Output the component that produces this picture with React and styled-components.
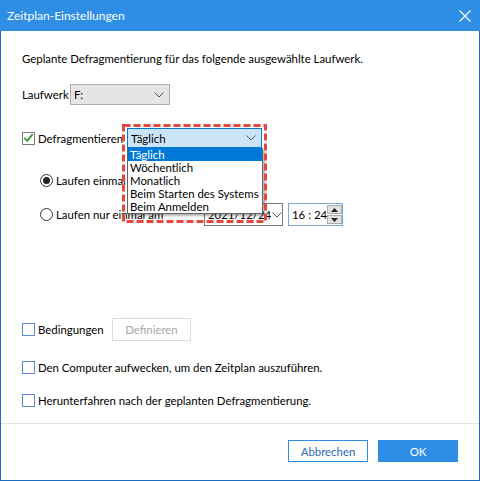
import React from "react";
import styled, { createGlobalStyle } from "styled-components";

const GlobalStyle = createGlobalStyle`
  html, body {
    margin: 0;
    padding: 0;
    background: #ffffff;
  }
  body {
    font-family: "Lato", "Noto Sans", "DejaVu Sans", sans-serif;
    font-size: 11.4px;
    color: #000;
  }
`;

const options = [
  "Täglich",
  "Wöchentlich",
  "Monatlich",
  "Beim Starten des Systems",
  "Beim Anmelden",
];

function App() {
  return (
    <>
      <GlobalStyle />
      <StWindow>
        <StTitleBar>
          <StTitle>Zeitplan-Einstellungen</StTitle>
          <StClose>
            <svg width="12" height="12" viewBox="0 0 12 12">
              <path d="M0.5 0.5 L11.5 11.5 M11.5 0.5 L0.5 11.5" stroke="#fff" strokeWidth="1.1" />
            </svg>
          </StClose>
        </StTitleBar>

        <StBody>
          <StRow $top={18} $h={18}>
            Geplante Defragmentierung für das folgende ausgewählte Laufwerk.
          </StRow>

          <StRow $top={17} $h={21}>
            <StLabel $w={48}>Laufwerk</StLabel>
            <StDriveSelect>
              <span>F:</span>
              <Chevron />
            </StDriveSelect>
          </StRow>

          <StRow $top={23} $h={20}>
            <StCheck $checked>
              <svg width="12" height="12" viewBox="0 0 12 12">
                <path d="M1.5 6 L4.6 9.2 L10.6 1.8" fill="none" stroke="#2ea02e" strokeWidth="2" />
              </svg>
            </StCheck>
            <StLabel $w={89}>Defragmentieren</StLabel>
            <StComboWrap>
              <StCombo>
                <span>Täglich</span>
                <Chevron />
              </StCombo>
              <StList>
                {options.map((o, i) => (
                  <StOption key={o} $selected={i === 0}>
                    {o}
                  </StOption>
                ))}
              </StList>
              <StFrame width="145" height="99" viewBox="0 0 145 99">
                <rect
                  x="1.5"
                  y="1.5"
                  width="142"
                  height="96"
                  fill="none"
                  stroke="#e8473f"
                  strokeWidth="3"
                  strokeDasharray="7 3"
                />
              </StFrame>
            </StComboWrap>
          </StRow>

          <StRow $top={24} $h={16} $indent={18}>
            <StRadio $checked />
            <StLabel>Laufen einmal täglich um</StLabel>
          </StRow>

          <StRow $top={15} $h={23} $indent={18}>
            <StRadio />
            <StLabel $w={148}>Laufen nur einmal am</StLabel>
            <StDate>
              <span>2021/12/24</span>
              <StDateArrow>
                <Chevron />
              </StDateArrow>
            </StDate>
            <StTime>
              <span>16 : 24</span>
              <StSpin>
                <StSpinBtn>
                  <svg width="7" height="4" viewBox="0 0 7 4">
                    <path d="M0 4 L3.5 0 L7 4 Z" fill="#222" />
                  </svg>
                </StSpinBtn>
                <StSpinBtn>
                  <svg width="7" height="4" viewBox="0 0 7 4">
                    <path d="M0 0 L3.5 4 L7 0 Z" fill="#222" />
                  </svg>
                </StSpinBtn>
              </StSpin>
            </StTime>
          </StRow>

          <StRow $top={92} $h={23}>
            <StCheck />
            <StLabel $w={74}>Bedingungen</StLabel>
            <StDisabledBtn>Definieren</StDisabledBtn>
          </StRow>

          <StRow $top={18} $h={16}>
            <StCheck />
            <StLabel>Den Computer aufwecken, um den Zeitplan auszuführen.</StLabel>
          </StRow>

          <StRow $top={17} $h={16}>
            <StCheck />
            <StLabel>Herunterfahren nach der geplanten Defragmentierung.</StLabel>
          </StRow>
        </StBody>

        <StFooter>
          <StCancelBtn>Abbrechen</StCancelBtn>
          <StOkBtn>OK</StOkBtn>
        </StFooter>
      </StWindow>
    </>
  );
}

function Chevron() {
  return (
    <svg width="10" height="6" viewBox="0 0 10 6">
      <path d="M0.5 0.5 L5 5 L9.5 0.5" fill="none" stroke="#555" strokeWidth="1" />
    </svg>
  );
}

export default App;

const StWindow = styled.div`
  width: 480px;
  height: 481px;
  box-sizing: border-box;
  border: 1px solid #1b6cc0;
  border-top: none;
  display: flex;
  flex-direction: column;
  background: #fff;
`;

const StTitleBar = styled.div`
  height: 31px;
  margin: 0 -1px;
  background-color: #2e8de4;
  display: flex;
  align-items: center;
  justify-content: space-between;
  padding: 0 8px 0 7px;
  flex-shrink: 0;
`;

const StTitle = styled.div`
  color: #fff;
  font-size: 12px;
`;

const StClose = styled.div`
  width: 14px;
  height: 14px;
  display: flex;
  align-items: center;
  justify-content: center;
`;

const StBody = styled.div`
  flex: 1;
  padding: 0 20px 0 21px;
`;

const StRow = styled.div`
  display: flex;
  align-items: center;
  height: ${(p) => p.$h}px;
  margin-top: ${(p) => p.$top}px;
  padding-left: ${(p) => p.$indent || 0}px;
  white-space: nowrap;
`;

const StLabel = styled.div`
  width: ${(p) => (p.$w ? `${p.$w}px` : "auto")};
  flex-shrink: 0;
`;

const StCheck = styled.div`
  width: 13px;
  height: 13px;
  box-sizing: border-box;
  border: 1px solid ${(p) => (p.$checked ? "#7a7a7a" : "#5b8ad4")};
  background: #fff;
  margin-right: 3px;
  display: flex;
  align-items: center;
  justify-content: center;
  flex-shrink: 0;
  overflow: visible;
`;

const StRadio = styled.div`
  width: 13px;
  height: 13px;
  box-sizing: border-box;
  border: 1px solid #333;
  border-radius: 50%;
  margin-right: 3px;
  flex-shrink: 0;
  position: relative;
  &::after {
    content: "";
    display: ${(p) => (p.$checked ? "block" : "none")};
    position: absolute;
    left: 2px;
    top: 2px;
    width: 7px;
    height: 7px;
    border-radius: 50%;
    background: #222;
  }
`;

const StDriveSelect = styled.div`
  width: 100px;
  height: 21px;
  box-sizing: border-box;
  border: 1px solid #adadad;
  background: #e5e5e5;
  display: flex;
  align-items: center;
  justify-content: space-between;
  padding: 0 5px 0 3px;
`;

const StComboWrap = styled.div`
  position: relative;
`;

const StCombo = styled.div`
  width: 135px;
  height: 20px;
  box-sizing: border-box;
  border: 1px solid #0078d7;
  background: #cce4f7;
  display: flex;
  align-items: center;
  justify-content: space-between;
  padding: 0 5px 0 3px;
`;

const StList = styled.div`
  position: absolute;
  left: 0;
  top: 20px;
  width: 136px;
  box-sizing: border-box;
  border: 1px solid #646464;
  border-top: none;
  background: #fff;
  box-shadow: 2px 2px 2px rgba(0, 0, 0, 0.3);
  z-index: 2;
`;

const StOption = styled.div`
  height: 13px;
  line-height: 13px;
  padding-left: 2px;
  background: ${(p) => (p.$selected ? "#0078d7" : "transparent")};
  color: ${(p) => (p.$selected ? "#fff" : "#000")};
`;

const StFrame = styled.svg`
  position: absolute;
  left: -5px;
  top: -4px;
  z-index: 3;
  pointer-events: none;
`;

const StDate = styled.div`
  width: 79px;
  height: 23px;
  box-sizing: border-box;
  border: 1px solid #7a7a7a;
  background: #fff;
  display: flex;
  align-items: center;
  justify-content: space-between;
  padding-left: 3px;
`;

const StDateArrow = styled.div`
  width: 16px;
  display: flex;
  justify-content: center;
`;

const StTime = styled.div`
  width: 55px;
  height: 23px;
  box-sizing: border-box;
  border: 1px solid #7aa7dc;
  background: #fff;
  display: flex;
  align-items: center;
  justify-content: space-between;
  padding: 0 1px 0 3px;
  margin-left: 5px;
`;

const StSpin = styled.div`
  display: flex;
  flex-direction: column;
  gap: 1px;
`;

const StSpinBtn = styled.div`
  width: 15px;
  height: 9px;
  box-sizing: border-box;
  border: 1px solid #adadad;
  background: #e1e1e1;
  display: flex;
  align-items: center;
  justify-content: center;
`;

const StDisabledBtn = styled.div`
  width: 79px;
  height: 23px;
  box-sizing: border-box;
  border: 1px solid #dcdcdc;
  background: #fff;
  color: #a6a6a6;
  display: flex;
  align-items: center;
  justify-content: center;
`;

const StFooter = styled.div`
  height: 57px;
  box-sizing: border-box;
  border-top: 1px solid #e3e3e3;
  display: flex;
  justify-content: flex-end;
  align-items: flex-start;
  gap: 10px;
  padding: 16px 21px 0 0;
  flex-shrink: 0;
`;

const StCancelBtn = styled.div`
  width: 80px;
  height: 22px;
  box-sizing: border-box;
  border: 1px solid #2e8de4;
  color: #2a6db7;
  background: #fff;
  display: flex;
  align-items: center;
  justify-content: center;
`;

const StOkBtn = styled.div`
  width: 80px;
  height: 22px;
  background: #2e8de4;
  color: #fff;
  display: flex;
  align-items: center;
  justify-content: center;
`;
